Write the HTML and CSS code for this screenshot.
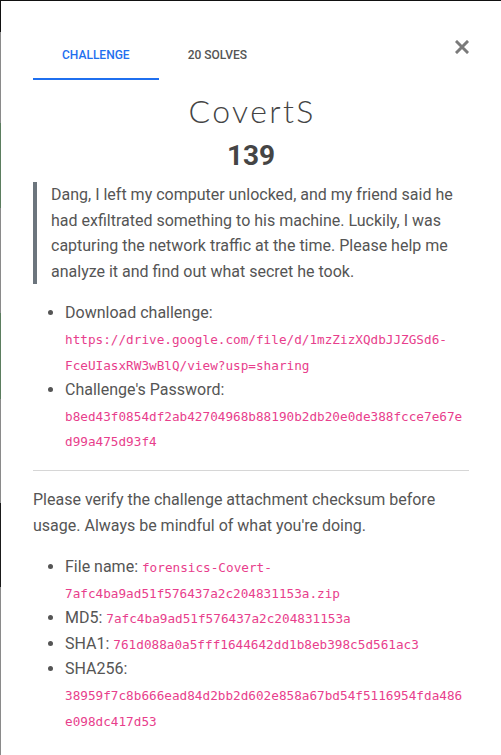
FILE: index.html
```html
<!DOCTYPE html>
<html lang="en">
<head>
<meta charset="utf-8">
<title>CovertS</title>
<link rel="stylesheet" href="styles.css">
</head>
<body>
<div class="page">
  <div class="backdrop-edge"></div>
  <div class="modal">
    <div class="tabs-row">
      <nav class="tabs">
        <a class="tab active">CHALLENGE</a>
        <a class="tab">20 SOLVES</a>
      </nav>
      <button class="close" aria-label="Close">
        <svg width="14" height="14" viewBox="0 0 14 14"><path d="M2 2 L12 12 M12 2 L2 12" stroke="#7a7a7a" stroke-width="3" stroke-linecap="square" fill="none"/></svg>
      </button>
    </div>
    <h1 class="title">CovertS</h1>
    <h2 class="value">139</h2>
    <div class="desc">
      <blockquote class="quote">
        <p>Dang, I left my computer unlocked, and my friend said he had exfiltrated something to his machine. Luckily, I was capturing the network traffic at the time. Please help me analyze it and find out what secret he took.</p>
      </blockquote>
      <ul class="list">
        <li>Download challenge: <code>https://drive.google.com/file/d/1mzZizXQdbJJZGSd6-FceUIasxRW3wBlQ/view?usp=sharing</code></li>
        <li>Challenge's Password: <code>b8ed43f0854df2ab42704968b88190b2db20e0de388fcce7e67ed99a475d93f4</code></li>
      </ul>
      <hr class="rule">
      <p class="note">Please verify the challenge attachment checksum before usage. Always be mindful of what you're doing.</p>
      <ul class="list">
        <li>File name: <code>forensics-Covert-7afc4ba9ad51f576437a2c204831153a.zip</code></li>
        <li>MD5: <code>7afc4ba9ad51f576437a2c204831153a</code></li>
        <li>SHA1: <code>761d088a0a5fff1644642dd1b8eb398c5d561ac3</code></li>
        <li>SHA256: <code>38959f7c8b666ead84d2bb2d602e858a67bd54f5116954fda486e098dc417d53</code></li>
      </ul>
    </div>
  </div>
</div>
</body>
</html>
```
FILE: styles.css
```css
html, body {
  margin: 0;
  padding: 0;
}
body {
  background: #111;
  font-family: Roboto, "Liberation Sans", sans-serif;
  font-size: 16px;
  line-height: 1.6;
  color: #555;
  overflow: hidden;
}
.page {
  display: flex;
  width: 501px;
  min-height: 755px;
}
.backdrop-edge {
  width: 1px;
  flex: none;
  background: linear-gradient(to bottom,
    #111 0, #111 32px,
    #8a8a8a 32px, #8a8a8a 123px,
    #5b7d5e 123px, #5b7d5e 208px,
    #8a8a8a 208px, #8a8a8a 313px,
    #5b7d5e 313px, #5b7d5e 399px,
    #8a8a8a 399px, #8a8a8a 503px,
    #1a1a1a 503px, #1a1a1a 587px,
    #8a8a8a 587px, #8a8a8a 100%);
}
.modal {
  flex: 1 1 0;
  min-width: 0;
  width: 500px;
  background: #fff;
  border-top: 1px solid #111;
  padding: 32px 32px 40px;
  min-height: 754px;
  box-sizing: border-box;
}
.tabs-row {
  display: flex;
  align-items: flex-start;
}
.tabs {
  display: flex;
}
.tab {
  display: block;
  height: 45px;
  line-height: 45px;
  padding: 0 29px;
  font-size: 12px;
  font-weight: 500;
  color: #555;
  border-bottom: 2px solid transparent;
  text-decoration: none;
}
.tab.active {
  color: #1f6fef;
  border-bottom-color: #1f6fef;
}
.close {
  margin-left: auto;
  margin-top: 7px;
  padding: 0;
  border: 0;
  background: none;
  width: 14px;
  height: 14px;
  display: block;
  flex: none;
}
.close svg {
  display: block;
}
.title {
  margin: 12px 0 0;
  font-family: Lato, "Open Sans", sans-serif;
  font-weight: 300;
  font-size: 32px;
  line-height: 1.2;
  letter-spacing: 2.4px;
  text-indent: 2.4px;
  text-align: center;
  color: #444;
}
.value {
  margin: 9px 0 0;
  font-size: 28px;
  font-weight: 700;
  line-height: 1.2;
  text-align: center;
  color: #454545;
}
.desc {
  min-width: 0;
}
.quote {
  margin: 9px 0 16px;
  border-left: 4px solid #6c757d;
  padding-left: 14px;
}
.quote p {
  margin: 0;
}
.list {
  margin: 0 0 16px;
  padding-left: 32px;
}
code {
  font-family: "DejaVu Sans Mono", "Liberation Mono", monospace;
  font-size: 12.7px;
  color: #e83e8c;
  overflow-wrap: break-word;
  word-wrap: break-word;
}
.rule {
  margin: 16px 0;
  border: 0;
  border-top: 1px solid #d6d6d6;
  height: 0;
}
.note {
  margin: 0 0 16px;
}
```
